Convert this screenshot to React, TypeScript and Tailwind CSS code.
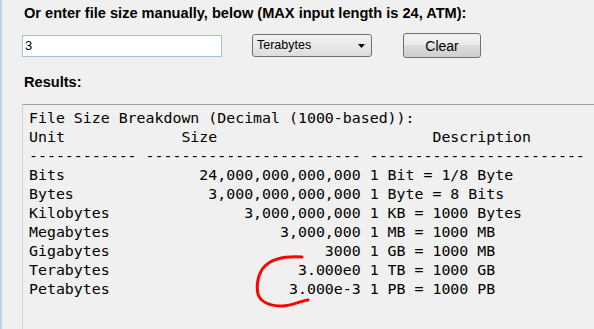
import React, { useState } from "react";

const rows: [string, string, string][] = [
  ["Bits", "24,000,000,000,000", "1 Bit = 1/8 Byte"],
  ["Bytes", "3,000,000,000,000", "1 Byte = 8 Bits"],
  ["Kilobytes", "3,000,000,000", "1 KB = 1000 Bytes"],
  ["Megabytes", "3,000,000", "1 MB = 1000 MB"],
  ["Gigabytes", "3000", "1 GB = 1000 MB"],
  ["Terabytes", "3.000e0", "1 TB = 1000 GB"],
  ["Petabytes", "3.000e-3", "1 PB = 1000 PB"],
];

const breakdown = [
  "File Size Breakdown (Decimal (1000-based)):",
  "Unit" + " ".repeat(13) + "Size" + " ".repeat(24) + "Description",
  "-".repeat(12) + " " + "-".repeat(24) + " " + "-".repeat(24),
  ...rows.map(([unit, size, desc]) => unit.padEnd(12) + " " + size.padStart(24) + " " + desc),
].join("\n");

const App: React.FC = () => {
  const [size, setSize] = useState<string>("3");

  return (
    <div className="relative flex w-[594px] h-[329px] overflow-hidden bg-[#f0f0f0] font-['Liberation_Sans',Arial,sans-serif] text-black">
      <div className="w-[2px] shrink-0 bg-[#bcd3eb]" />
      <div className="flex flex-col flex-1 pl-[20px]">
        <p className="mt-[5px] ml-[2px] text-[14.6px] leading-[16px] font-bold whitespace-nowrap">
          Or enter file size manually, below (MAX input length is 24, ATM):
        </p>
        <div className="flex items-center h-[25px] mt-[12px]">
          <input
            className="w-[200px] h-[22px] bg-white border border-[#a3c0de] px-[2px] text-[13px] outline-none"
            value={size}
            onChange={(e) => setSize(e.target.value)}
          />
          <div className="relative flex items-center w-[120px] h-[23px] ml-[30px] pl-[4px] rounded-[3px] border border-[#707070] bg-gradient-to-b from-[#f3f3f3] to-[#dddddd] text-[12.5px]">
            Terabytes
            <svg className="absolute right-[6px] top-[9px]" width="7" height="4" viewBox="0 0 7 4">
              <path d="M0 0 L7 0 L3.5 4 Z" fill="#000" />
            </svg>
          </div>
          <button className="w-[78px] h-[25px] ml-[31px] rounded-[3px] border border-[#707070] bg-[linear-gradient(#f2f2f2_0%,#ebebeb_50%,#dddddd_50%,#cfcfcf_100%)] text-[14px] leading-none">
            Clear
          </button>
        </div>
        <p className="mt-[16px] ml-[2px] text-[14.6px] leading-[16px] font-bold">Results:</p>
        <div className="flex-1 w-[620px] mt-[14px] border-t border-l border-t-[#a0a0a0] border-l-[#d5d5d5] pl-[6px] pt-[4px]">
          <pre className="font-['DejaVu_Sans_Mono',monospace] text-[14.9px] leading-[19px] text-black">
            {breakdown}
          </pre>
        </div>
      </div>
      <svg className="absolute left-0 top-0 pointer-events-none" width="594" height="329">
        <path
          d="M302 257 C285 256, 272 259, 265 266 C258 273, 256 285, 258 294 C260 302, 270 306, 282 306 C292 306, 300 301, 308 300"
          fill="none"
          stroke="#ff0000"
          strokeWidth="3"
          strokeLinecap="round"
        />
      </svg>
    </div>
  );
};

export default App;
